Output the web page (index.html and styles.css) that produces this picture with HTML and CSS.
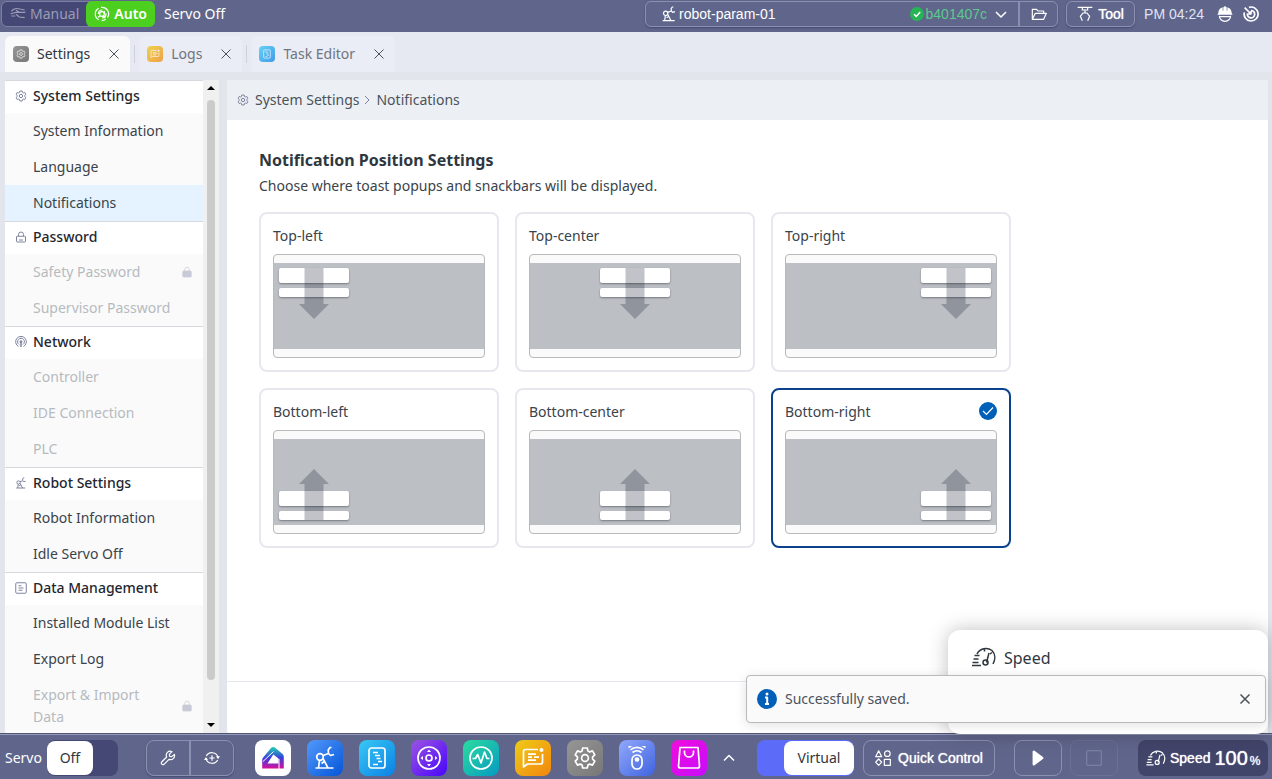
FILE: index.html
```html
<!DOCTYPE html>
<html lang="en">
  <head>
    <meta charset="UTF-8" />
    <meta name="viewport" content="width=device-width, initial-scale=1.0" />
    <title>Settings - Notifications</title>
    <link rel="stylesheet" href="styles.css">
  </head>
  <body>
    <!-- shared icons -->
    <svg class="sprite" aria-hidden="true">
      <defs>
        <linearGradient id="homeGradient" x1="0" y1="0" x2="0" y2="1">
          <stop offset="0" stop-color="#1fd3b0" />
          <stop offset="0.5" stop-color="#3a3fdc" />
          <stop offset="1" stop-color="#d8109a" />
        </linearGradient>
      </defs>
      <symbol id="gear" viewBox="0 0 24 24">
        <path d="M9.700 2h4.600l.6 2.900 1.800 1 2.800-1 2.300 4-2.200 1.900v2.400l2.200 1.900-2.300 4-2.800-1-1.800 1-.6 2.900H9.700l-.6-2.900-1.800-1-2.800 1-2.300-4 2.200-1.900v-2.400L2.200 8.900l2.300-4 2.800 1 1.800-1z" />
        <circle cx="12" cy="12" r="3.400" />
      </symbol>
      <symbol id="robot" viewBox="0 0 24 24">
        <circle cx="7" cy="11" r="3.300" />
        <path d="M10 9.500 15.500 7.500M18.500 1.500h-1.500L15.200 4l.3 3.500 2 2 3.500-1M6.500 14.300 5.500 22M10 12.500l5 9.500M8.500 17.500l3.500-2.500M2.500 22h18" />
      </symbol>
      <symbol id="close" viewBox="0 0 16 16">
        <path d="M3.500 3.500l9 9M12.500 3.500l-9 9" />
      </symbol>
      <symbol id="lock" viewBox="0 0 24 24">
        <rect x="3" y="10.500" width="18" height="11.500" rx="1.500" />
        <path d="M7 10.500V7a5 5 0 0 1 10 0v3.500M8 18h8" />
      </symbol>
      <symbol id="lockSolid" viewBox="0 0 24 24">
        <rect x="3.500" y="10" width="17" height="12" rx="1.500" fill="currentColor" />
        <path d="M7.500 10V7a4.500 4.500 0 0 1 9 0v3" />
      </symbol>
      <symbol id="network" viewBox="0 0 24 24">
        <path d="M7 21a10.700 10.700 0 1 1 10 0M8.200 17a6.800 6.800 0 1 1 7.600 0" />
        <circle cx="12" cy="11.500" r="2" fill="currentColor" />
        <path d="M12 12v10" stroke-width="3" />
      </symbol>
      <symbol id="document" viewBox="0 0 24 24">
        <rect x="1.500" y="1.500" width="21" height="21" rx="2" />
        <path d="M7 7.500h6M7 12h10M7 16.500h8" />
      </symbol>
      <symbol id="task" viewBox="0 0 24 24">
        <rect x="4" y="2" width="16" height="20" rx="2.500" />
        <path d="M8 6.500h5M10 9.500h5M11.500 12.500h4M13 15.500h4M8 18.500h5" />
      </symbol>
      <symbol id="logs" viewBox="0 0 24 24">
        <path d="M17 3.500H4.500a2 2 0 0 0-2 2V21l4-3h13a2 2 0 0 0 2-2V8M7 8.200h8M7 11.200h4M13 11.200h5M7 14.200h8" />
        <circle cx="20.500" cy="4" r="2" fill="currentColor" stroke="none" />
      </symbol>
      <symbol id="speed" viewBox="0 0 24 20">
        <path d="M5 7a10 10 0 0 1 15-3.500c3.500 3.500 3.500 9 1 13.500M12.500 1.500v3M20 5.500l-2 1.500M2.500 8.500h5M1.500 12h5M.5 15.500h6M0 18.500h9" />
        <path d="M17 6l-2.500 9.500" />
        <circle cx="13.500" cy="15.500" r="2.500" />
      </symbol>
      <symbol id="toastArrow" viewBox="0 0 30 51">
        <path d="M5.500 0h19v36H30L15 51 0 36h5.500z" fill="#192332" fill-opacity="0.27" stroke="none" />
      </symbol>
    </svg>

    <header class="topbar">
      <div class="mode">
        <button class="mode-btn" type="button">
          <svg class="icon" viewBox="0 0 24 24"><path d="M1 11.500c4 0 5-2 8-2h14M2 8c3-4 8-5 13-3.500l7 1.500M9 6.500l5 3M9 12.500l5 4 8 1M2 15h6" /></svg>
          Manual
        </button>
        <button class="mode-btn mode-auto" type="button">
          <svg class="icon" viewBox="0 0 24 24"><circle cx="12" cy="12" r="3.500" /><path d="M7 20.500A9.800 9.800 0 0 1 7 3.300M10.500 2.200a9.800 9.800 0 0 1 9.800 15M17.500 20a9.800 9.800 0 0 1-6 2M15.500 12V7.500M9.500 14.500l-3.500 2.500M13.500 15l3.500 3M6.500 12c0-3 2-6 6-6M18 11c0 4-2 7-6 7" /></svg>
          Auto
        </button>
      </div>
      <span class="servo-state">Servo Off</span>

      <div class="param-bar">
        <button class="param" type="button">
          <svg class="icon"><use href="#robot" /></svg>
          <span class="param-name">robot-param-01</span>
          <svg class="icon-check" viewBox="0 0 14 14"><circle cx="7" cy="7" r="7" fill="#27b457" stroke="none" /><path d="M4 7.200l2.200 2.200L10.200 5" /></svg>
          <span class="param-hash">b401407c</span>
          <svg class="icon-chevron" viewBox="0 0 12 12"><path d="M1 4l5 5 5-5" /></svg>
        </button>
        <button class="param-open" type="button" aria-label="Open">
          <svg class="icon" viewBox="0 0 24 24"><path d="M2 20V5h6.500l2 2.500H19V11M2 20l4.500-9H23l-4 9z" /></svg>
        </button>
      </div>
      <button class="tool" type="button">
        <svg class="icon" viewBox="0 0 24 24"><path d="M1 2h22M8 2v4h8V2M12 6v4M8.500 10.500h7M9 10.500 5 15.500l3 6.500M15 10.500l4 5-3 6.500" /></svg>
        Tool
      </button>
      <span class="clock">PM 04:24</span>
      <button class="top-icon" type="button" aria-label="Operator">
        <svg class="icon" viewBox="0 0 24 24"><path d="M2 10.500C2 5 6 1.500 12 1.500S22 5 22 10.500l1.500 2.500H.5z" fill="currentColor" stroke="none" /><path d="M9 1v6M15 1v6" stroke="#60668b" stroke-width="1" /><path d="M12 0v5M3.500 14.500c0 5 4 8.500 8.500 8.500s8.500-3.500 8.500-8.500M4 16h16" /></svg>
      </button>
      <button class="top-icon" type="button" aria-label="Status">
        <svg class="icon icon-bold" viewBox="0 0 24 24"><path d="M9 2a10.500 10.500 0 1 1-7 7.500M12 6.800a5.500 5.500 0 1 1-5.300 4.200M2.500 2.500l9.500 9.500M7.500 12H12V7.500" /></svg>
      </button>
    </header>

    <nav class="tabs">
      <div class="tab active">
        <span class="tab-icon app-gray"><svg><use href="#gear" /></svg></span>
        <a href="#settings">Settings</a>
        <button type="button" aria-label="Close Settings"><svg><use href="#close" /></svg></button>
      </div>
      <span class="tab-divider"></span>
      <div class="tab">
        <span class="tab-icon app-yellow"><svg><use href="#logs" /></svg></span>
        <a href="#logs">Logs</a>
        <button type="button" aria-label="Close Logs"><svg><use href="#close" /></svg></button>
      </div>
      <span class="tab-divider"></span>
      <div class="tab">
        <span class="tab-icon app-cyan"><svg><use href="#task" /></svg></span>
        <a href="#task-editor">Task Editor</a>
        <button type="button" aria-label="Close Task Editor"><svg><use href="#close" /></svg></button>
      </div>
    </nav>

    <div class="workspace">
      <aside class="sidebar">
        <nav class="menu">
          <section>
            <h2><svg class="menu-icon"><use href="#gear" /></svg>System Settings</h2>
            <a href="#system-information">System Information</a>
            <a href="#language">Language</a>
            <a class="selected" href="#notifications">Notifications</a>
          </section>
          <section>
            <h2><svg class="menu-icon"><use href="#lock" /></svg>Password</h2>
            <a class="disabled" href="#safety-password"><span>Safety Password</span><svg class="menu-lock"><use href="#lockSolid" /></svg></a>
            <a class="disabled" href="#supervisor-password">Supervisor Password</a>
          </section>
          <section>
            <h2><svg class="menu-icon"><use href="#network" /></svg>Network</h2>
            <a class="disabled" href="#controller">Controller</a>
            <a class="disabled" href="#ide-connection">IDE Connection</a>
            <a class="disabled" href="#plc">PLC</a>
          </section>
          <section>
            <h2><svg class="menu-icon"><use href="#robot" /></svg>Robot Settings</h2>
            <a href="#robot-information">Robot Information</a>
            <a href="#idle-servo-off">Idle Servo Off</a>
          </section>
          <section>
            <h2><svg class="menu-icon"><use href="#document" /></svg>Data Management</h2>
            <a href="#modules">Installed Module List</a>
            <a href="#export-log">Export Log</a>
            <a class="disabled" href="#export-import"><span>Export &amp; Import Data</span><svg class="menu-lock"><use href="#lockSolid" /></svg></a>
          </section>
        </nav>
        <div class="scrollbar" aria-hidden="true">
          <span class="arrow-up"></span>
          <span class="thumb"></span>
          <span class="arrow-down"></span>
        </div>
      </aside>

      <main class="panel">
        <div class="breadcrumb">
          <svg class="menu-icon"><use href="#gear" /></svg>
          <span>System Settings</span>
          <svg class="crumb-arrow" viewBox="0 0 5 10"><path d="M0 1l4 4-4 4" /></svg>
          <span>Notifications</span>
        </div>
        <div class="content">
          <h1>Notification Position Settings</h1>
          <p>Choose where toast popups and snackbars will be displayed.</p>
          <div class="cards">
            <label class="card">
              <span class="card-title">Top-left<input type="radio" name="position" value="top-left" /></span>
              <span class="preview top left"><span class="screen"><span class="toasts"><i></i><i class="thin"></i><svg><use href="#toastArrow" /></svg></span></span></span>
            </label>
            <label class="card">
              <span class="card-title">Top-center<input type="radio" name="position" value="top-center" /></span>
              <span class="preview top center"><span class="screen"><span class="toasts"><i></i><i class="thin"></i><svg><use href="#toastArrow" /></svg></span></span></span>
            </label>
            <label class="card">
              <span class="card-title">Top-right<input type="radio" name="position" value="top-right" /></span>
              <span class="preview top right"><span class="screen"><span class="toasts"><i></i><i class="thin"></i><svg><use href="#toastArrow" /></svg></span></span></span>
            </label>
            <label class="card">
              <span class="card-title">Bottom-left<input type="radio" name="position" value="bottom-left" /></span>
              <span class="preview bottom left"><span class="screen"><span class="toasts"><i></i><i class="thin"></i><svg><use href="#toastArrow" /></svg></span></span></span>
            </label>
            <label class="card">
              <span class="card-title">Bottom-center<input type="radio" name="position" value="bottom-center" /></span>
              <span class="preview bottom center"><span class="screen"><span class="toasts"><i></i><i class="thin"></i><svg><use href="#toastArrow" /></svg></span></span></span>
            </label>
            <label class="card">
              <span class="card-title">Bottom-right<input type="radio" name="position" value="bottom-right" checked /></span>
              <span class="preview bottom right"><span class="screen"><span class="toasts"><i></i><i class="thin"></i><svg><use href="#toastArrow" /></svg></span></span></span>
            </label>
          </div>
        </div>
        <div class="panel-footer"></div>
      </main>
    </div>

    <footer class="dock">
      <span class="servo-label" id="servoLabel">Servo</span>
      <button class="switch" type="button" role="switch" aria-checked="false" aria-labelledby="servoLabel"><span class="knob">Off</span></button>

      <div class="pair">
        <button type="button" aria-label="Tools">
          <svg class="icon" viewBox="0 0 24 24"><path d="M21.500 6.500l-4 3.500-3-.5-.5-3 4-4a6 6 0 0 0-8 8L2.500 18a2.500 2.500 0 0 0 3.500 3.500l7.500-7.500a6 6 0 0 0 8-7.500z" /></svg>
        </button>
        <button type="button" aria-label="Jog">
          <svg class="icon" viewBox="0 0 24 24"><path d="M3.500 9a9.500 9.500 0 0 1 17.500 2M20.500 15a9.500 9.500 0 0 1-17.500-2M12 8v8M8 12h8" /><path d="M0 15h6l-3-4.500zM18 9.500h6l-3 4.500z" fill="currentColor" stroke="none" /></svg>
        </button>
      </div>

      <nav class="apps">
        <a class="app app-white" href="#home" aria-label="Home">
          <svg viewBox="0 0 24 24"><path d="M12 1c1 0 1.700.4 2.400 1L21 7.500c1.300 1 1.800 2 1.800 3.600V22.500H1.200V14c0-1 .3-1.700 1-2.400L10 2c.6-.6 1.200-1 2-1zM12.300 8.500 6.500 17.500H17.500V12.500z" fill="url(#homeGradient)" fill-rule="evenodd" stroke="none" /><path d="M2 15.500 12.500 5.500M18 13v10" stroke="#fff" stroke-width="1" /></svg>
        </a>
        <a class="app app-blue" href="#robot-app" aria-label="Robot"><svg><use href="#robot" /></svg></a>
        <a class="app app-cyan" href="#task-editor" aria-label="Task Editor"><svg><use href="#task" /></svg></a>
        <a class="app app-purple" href="#move" aria-label="Move">
          <svg viewBox="0 0 24 24"><circle cx="12" cy="12" r="11" /><circle cx="12" cy="12" r="3" /><path d="M12 3.500l2 2.500h-4zM12 20.500l2-2.500h-4zM3.500 12 6 10v4zM20.500 12 18 10v4z" fill="currentColor" stroke="none" /></svg>
        </a>
        <a class="app app-teal" href="#monitor" aria-label="Monitor">
          <svg viewBox="0 0 24 24"><circle cx="12" cy="12" r="11" /><path d="M3.500 12.500h3l2.200-4L12 17l3.500-11 2.500 6.500h2.500" /></svg>
        </a>
        <a class="app app-yellow" href="#logs" aria-label="Logs"><svg><use href="#logs" /></svg></a>
        <a class="app app-gray" href="#settings" aria-label="Settings"><svg><use href="#gear" /></svg></a>
        <a class="app app-sky" href="#remote" aria-label="Remote">
          <svg viewBox="0 0 24 24"><rect x="7" y="9" width="10" height="14" rx="5" /><circle cx="12" cy="13.500" r="1.500" fill="currentColor" /><path d="M7.500 6.500a7 7 0 0 1 9 0M5.500 3.800a10 10 0 0 1 13 0M3.500 1.500a13 13 0 0 1 17 0" /></svg>
        </a>
        <a class="app app-pink" href="#store" aria-label="Store">
          <svg viewBox="0 0 24 24"><path d="M3 1.500h18l1.500 18.500a2 2 0 0 1-2 2h-17a2 2 0 0 1-2-2zM7.500 4.500v2a4.500 4.500 0 0 0 9 0v-2" /></svg>
        </a>
      </nav>
      <button class="dock-more" type="button" aria-label="More apps">
        <svg class="icon-chevron" viewBox="0 0 12 12"><path d="M1 8.500l5-5 5 5" /></svg>
      </button>

      <button class="switch switch-virtual" type="button" role="switch" aria-checked="true"><span class="knob">Virtual</span></button>
      <button class="dock-btn quick" type="button">
        <svg class="icon" viewBox="0 0 24 24"><path d="M5.500 1l4.500 9H1z" /><circle cx="18.500" cy="5.500" r="4.200" /><path d="M5.500 13.500l4.500 4.800-4.500 4.700L1 18.300z" /><rect x="14" y="14" width="9" height="9" /></svg>
        Quick Control
      </button>
      <button class="dock-btn play" type="button" aria-label="Play">
        <svg viewBox="0 0 24 24"><path d="M7 4.500v15l10-7.500z" fill="currentColor" stroke-width="3" /></svg>
      </button>
      <button class="dock-btn stop" type="button" aria-label="Stop" disabled>
        <svg class="icon" viewBox="0 0 24 24"><rect x="1" y="1" width="22" height="22" rx="2" /></svg>
      </button>
      <button class="speed" type="button">
        <svg class="speed-icon"><use href="#speed" /></svg>
        Speed <b>100</b><small>%</small>
      </button>
    </footer>

    <div class="speed-popup">
      <svg><use href="#speed" /></svg>
      <span>Speed</span>
    </div>

    <div class="snackbar" role="status">
      <svg class="info" viewBox="0 0 20 20"><circle cx="10" cy="10" r="10" fill="#005fb8" stroke="none" /><circle cx="10" cy="5" r="1.500" fill="#fff" stroke="none" /><path d="M8 8.500h2.200V15M8 15h4" stroke="#fff" stroke-width="2" /></svg>
      <span>Successfully saved.</span>
      <button type="button" aria-label="Dismiss"><svg><use href="#close" /></svg></button>
    </div>
  </body>
</html>
```
FILE: styles.css
```css
* {
  box-sizing: border-box;
}

body {
  margin: 0;
  height: 100vh;
  display: flex;
  flex-direction: column;
  overflow: hidden;
  background-color: #e2e6ec;
  color: #2f373f;
  font-family: "Noto Sans", sans-serif;
  font-size: 14px;
  line-height: 22px;
}

button {
  margin: 0;
  padding: 0;
  border: 0;
  background: none;
  color: inherit;
  font: inherit;
}

a {
  color: inherit;
  text-decoration: none;
}

svg {
  flex: none;
  fill: none;
  stroke: currentColor;
  stroke-width: 1.5;
  stroke-linejoin: round;
}

.sprite {
  position: absolute;
  width: 0;
  height: 0;
}

.icon {
  width: 16px;
  height: 16px;
  stroke-width: 1.8;
}

.icon-bold {
  stroke-width: 2.5;
}

.icon-chevron {
  width: 12px;
  height: 12px;
}

/* top bar */
.topbar {
  flex: none;
  display: flex;
  align-items: center;
  height: 32px;
  padding: 0 13px 4px 1px;
  background-color: #60668b;
  color: #fff;
}

.mode {
  display: flex;
  height: 26px;
  border: 1px solid #7c80a5;
  border-radius: 6px;
  background-color: #454874;
}

.mode-btn {
  display: flex;
  align-items: center;
  gap: 4px;
  padding: 0 8px;
  color: #9a9cb9;
}

.mode-auto {
  margin: -1px;
  border-radius: 6px;
  background-color: #4ccf1f;
  color: #fff;
  font-weight: 600;
}

.servo-state {
  margin-left: 9px;
}

.param-bar {
  display: flex;
  width: 413px;
  height: 26px;
  margin-left: auto;
  border: 1px solid #8c90b0;
  border-radius: 6px;
  box-shadow: 0 1px 2px #454874;
}

.param,
.tool,
.quick,
.speed,
.clock {
  font-family: "Liberation Sans", sans-serif;
}

.tool,
.quick,
.speed {
  text-shadow: 0 0 1px currentColor;
}

.param {
  flex: 1;
  display: flex;
  align-items: center;
  padding: 0 11px 0 15px;
}

.param-name {
  flex: 1;
  margin-left: 2px;
  text-align: left;
}

.icon-check {
  width: 14px;
  height: 14px;
}

.param-hash {
  margin: 0 8px 0 2px;
  color: #5cc98e;
}

.param-open {
  width: 39px;
  border-left: 2px solid #8c90b0;
}

.param-open svg {
  display: block;
  margin: auto;
}

.tool {
  display: flex;
  align-items: center;
  justify-content: center;
  gap: 5px;
  width: 69px;
  height: 26px;
  margin: 0 9px 0 8px;
  border: 1px solid #8c90b0;
  border-radius: 6px;
  box-shadow: 0 1px 2px #454874;
}

.clock {
  color: #e0e3f4;
}

.top-icon {
  display: flex;
  margin-left: 13px;
}

.top-icon + .top-icon {
  margin-left: 10px;
}

/* tabs */
.tabs {
  flex: none;
  display: flex;
  align-items: center;
  height: 40px;
  padding: 4px 5px 0;
  background-color: #e6e9f1;
}

.tab {
  display: flex;
  align-items: center;
  gap: 8px;
  height: 36px;
  padding: 0 8px;
  border-radius: 6px 6px 0 0;
  background-color: #eaedf5;
  color: #70747e;
}

.tab.active {
  background-color: #fafafa;
  color: #2f373f;
}

.tab button {
  display: flex;
  margin-left: 8px;
  color: #4b525a;
}

.tab button svg {
  width: 16px;
  height: 16px;
  stroke-width: 1;
}

.tab-divider {
  width: 1px;
  height: 18px;
  margin: 0 4px;
  background-color: #cdd1d8;
}

.tab-icon {
  display: flex;
  width: 16px;
  height: 16px;
  padding: 3px;
  border-radius: 4px;
  color: #fff;
}

.tab-icon svg {
  width: 10px;
  height: 10px;
}

/* workspace */
.workspace {
  flex: 1;
  display: flex;
  gap: 8px;
  min-height: 0;
  padding: 8px 4px 0 5px;
}

.sidebar {
  display: flex;
  width: 214px;
  background-color: #fafafa;
}

.menu {
  flex: 1;
  overflow: hidden;
}

.menu section {
  border-top: 1px solid #d5d9de;
}

.menu h2 {
  display: flex;
  align-items: center;
  gap: 6px;
  height: 32px;
  margin: 0;
  padding: 0 10px 2px;
  background-color: #fff;
  color: #1f272f;
  font-size: 14px;
  font-weight: 500;
}

.menu-icon {
  width: 12px;
  height: 12px;
  color: #7f849e;
  stroke-width: 2;
}

.menu a {
  display: flex;
  align-items: center;
  justify-content: space-between;
  padding: 7px 10px 7px 28px;
  color: #3a434b;
}

.menu a.selected {
  background-color: #e4f3ff;
}

.menu a.disabled {
  color: #b6babf;
}

.menu a span {
  width: 130px;
}

.menu-lock {
  width: 12px;
  height: 12px;
  color: #c9cad8;
}

.scrollbar {
  display: flex;
  flex-direction: column;
  align-items: center;
  width: 16px;
  padding: 6px 0;
  background-color: #f0f0f0;
}

.arrow-up,
.arrow-down {
  border: 4px solid transparent;
}

.arrow-up {
  border-top: 0;
  border-bottom-color: #000;
}

.arrow-down {
  border-bottom: 0;
  border-top-color: #000;
}

.thumb {
  flex: 1;
  width: 8px;
  margin: 10px 0 43px;
  border-radius: 4px;
  background-color: #cbcbcb;
}

.panel {
  flex: 1;
  display: flex;
  flex-direction: column;
  border-radius: 2px;
  background-color: #fff;
}

.breadcrumb {
  display: flex;
  align-items: center;
  gap: 6px;
  height: 40px;
  padding: 0 10px;
  background-color: #ecf0f5;
  color: #4b525a;
}

.crumb-arrow {
  width: 5px;
  height: 10px;
  color: #7f849e;
  stroke-width: 1;
}

.content {
  flex: 1;
  padding: 28px 32px;
}

.content h1 {
  margin: 0;
  font-size: 16px;
  font-weight: 700;
  line-height: 24px;
}

.content p {
  margin: 3px 0 15px;
  color: #3a434b;
}

.cards {
  display: grid;
  grid-template-columns: repeat(auto-fill, 240px);
  gap: 16px;
  max-width: 752px;
}

.card {
  display: block;
  height: 160px;
  padding: 12px;
  border: 2px solid #e6e8ee;
  border-radius: 8px;
}

.card:has(:checked) {
  border-color: #0a438c;
}

.card-title {
  display: flex;
  align-items: flex-start;
  justify-content: space-between;
  height: 20px;
  margin-bottom: 8px;
  color: #3a434b;
  line-height: 20px;
}

.card-title input {
  appearance: none;
  width: 18px;
  height: 18px;
  margin: 0;
  border-radius: 50%;
}

.card-title input:checked {
  background: #005fb8 url("data:image/svg+xml,%3Csvg xmlns='http://www.w3.org/2000/svg' viewBox='0 0 18 18'%3E%3Cpath d='M4 9l3.500 3.500L14 5.500' fill='none' stroke='white' stroke-width='1.200'/%3E%3C/svg%3E");
}

/* miniature screen inside a card */
.preview {
  display: block;
  height: 104px;
  padding: 8px 0;
  border: 1px solid #b7b9bd;
  border-radius: 4px;
  background-color: #fafafa;
}

.screen {
  display: flex;
  height: 100%;
  padding: 5px;
  background-color: #bcbfc4;
}

.center .screen {
  justify-content: center;
}

.right .screen {
  justify-content: flex-end;
}

.bottom .screen {
  align-items: flex-end;
}

.toasts {
  position: relative;
  width: 70px;
}

.toasts i {
  display: block;
  height: 15px;
  margin-bottom: 5px;
  border-radius: 2px;
  background-color: #fff;
  box-shadow: 0 1px 2px #777b80;
}

.toasts .thin {
  height: 9px;
  margin-bottom: 0;
}

.toasts svg {
  position: absolute;
  top: 0;
  left: 20px;
  width: 30px;
  height: 51px;
}

.bottom .toasts svg {
  top: auto;
  bottom: 0;
  transform: rotate(180deg);
}

.panel-footer {
  height: 52px;
  border-top: 1px solid #e4e7ec;
}

/* dock */
.dock {
  flex: none;
  display: flex;
  align-items: center;
  height: 46px;
  padding: 2px 4px 0 5px;
  border-top: 1px solid #50567a;
  background-color: #60668b;
  box-shadow: inset 0 1px #9599b8;
  color: #fff;
}

.switch {
  display: flex;
  width: 71px;
  height: 36px;
  margin-left: 5px;
  padding: 1px 0;
  border-radius: 8px;
  background-color: #454874;
}

.knob {
  display: flex;
  align-items: center;
  justify-content: center;
  width: 46px;
  height: 34px;
  border-radius: 8px;
  background-color: #fff;
  color: #2f373f;
}

.switch-virtual {
  justify-content: flex-end;
  width: 97px;
  margin-left: 0;
  background-color: #5c6cf9;
}

.switch-virtual .knob {
  width: 70px;
}

.pair {
  display: flex;
  width: 88px;
  height: 36px;
  margin-left: 28px;
  border: 1px solid #8c90b0;
  border-radius: 8px;
  box-shadow: 0 1px 2px #454874;
}

.pair button {
  flex: 1;
}

.pair button + button {
  border-left: 2px solid #8c90b0;
}

.pair svg {
  display: block;
  margin: auto;
}

.apps {
  display: flex;
  gap: 16px;
  margin-left: 21px;
}

.app {
  display: flex;
  align-items: center;
  justify-content: center;
  width: 36px;
  height: 36px;
  border-radius: 8px;
  color: #fff;
}

.app svg {
  width: 24px;
  height: 24px;
  stroke-width: 1.7;
}

.app-white {
  background-color: #fff;
}

.app-blue {
  background: linear-gradient(135deg, #5399fb, #0455d8);
}

.app-cyan {
  background: linear-gradient(135deg, #38c9f5, #0b80e4);
}

.app-purple {
  background: linear-gradient(135deg, #9b54e2, #4806fa);
}

.app-teal {
  background: linear-gradient(135deg, #2bdc9f, #069ac2);
}

.app-yellow {
  background: linear-gradient(135deg, #efcb17, #f2860f);
}

.app-gray {
  background: linear-gradient(135deg, #969696, #777);
}

.app-sky {
  background: linear-gradient(135deg, #91a8fc, #4064df);
}

.app-pink {
  background: linear-gradient(135deg, #f00ddd, #c70cfb);
}

.tab .app-yellow,
.tab .app-cyan {
  opacity: 0.75;
}

.dock-more {
  display: flex;
  margin: 0 auto 0 16px;
}

.dock-btn {
  display: flex;
  align-items: center;
  justify-content: center;
  width: 48px;
  height: 36px;
  margin-left: 8px;
  border: 1px solid #8c90b0;
  border-radius: 8px;
}

.quick {
  gap: 7px;
  width: 132px;
  margin-left: 9px;
}

.play {
  margin-left: 19px;
}

.play svg {
  width: 20px;
  height: 20px;
}

.stop {
  border-color: #6b7095;
  color: #7b80a2;
}

.speed {
  display: flex;
  align-items: center;
  width: 130px;
  height: 36px;
  margin-left: 20px;
  padding: 0 8px;
  border-radius: 8px;
  background-color: #42456a;
}

.speed-icon {
  width: 20px;
  height: 16px;
  margin-right: 4px;
}

.speed b {
  margin-left: 4px;
  font-size: 20px;
  font-weight: 400;
}

.speed small {
  margin-left: 2px;
  padding-top: 6px;
  font-size: 12px;
}

/* overlays */
.speed-popup {
  position: absolute;
  right: 4px;
  bottom: 45px;
  display: flex;
  gap: 8px;
  width: 320px;
  height: 104px;
  padding: 17px 24px;
  border-radius: 12px;
  background-color: #fff;
  box-shadow: 0 0 20px rgba(0, 0, 0, 0.25);
  font-size: 16px;
}

.speed-popup svg {
  width: 24px;
  height: 20px;
}

.snackbar {
  position: absolute;
  right: 6px;
  bottom: 56px;
  display: flex;
  align-items: center;
  gap: 8px;
  width: 520px;
  height: 48px;
  padding: 0 12px 0 10px;
  border: 1px solid #b7b9bd;
  border-radius: 4px;
  background-color: #fafafa;
  box-shadow: 0 2px 12px rgba(0, 0, 0, 0.12);
  color: #4b525a;
}

.info {
  width: 20px;
  height: 20px;
}

.snackbar button {
  display: flex;
  margin-left: auto;
}

.snackbar button svg {
  width: 16px;
  height: 16px;
}
```
